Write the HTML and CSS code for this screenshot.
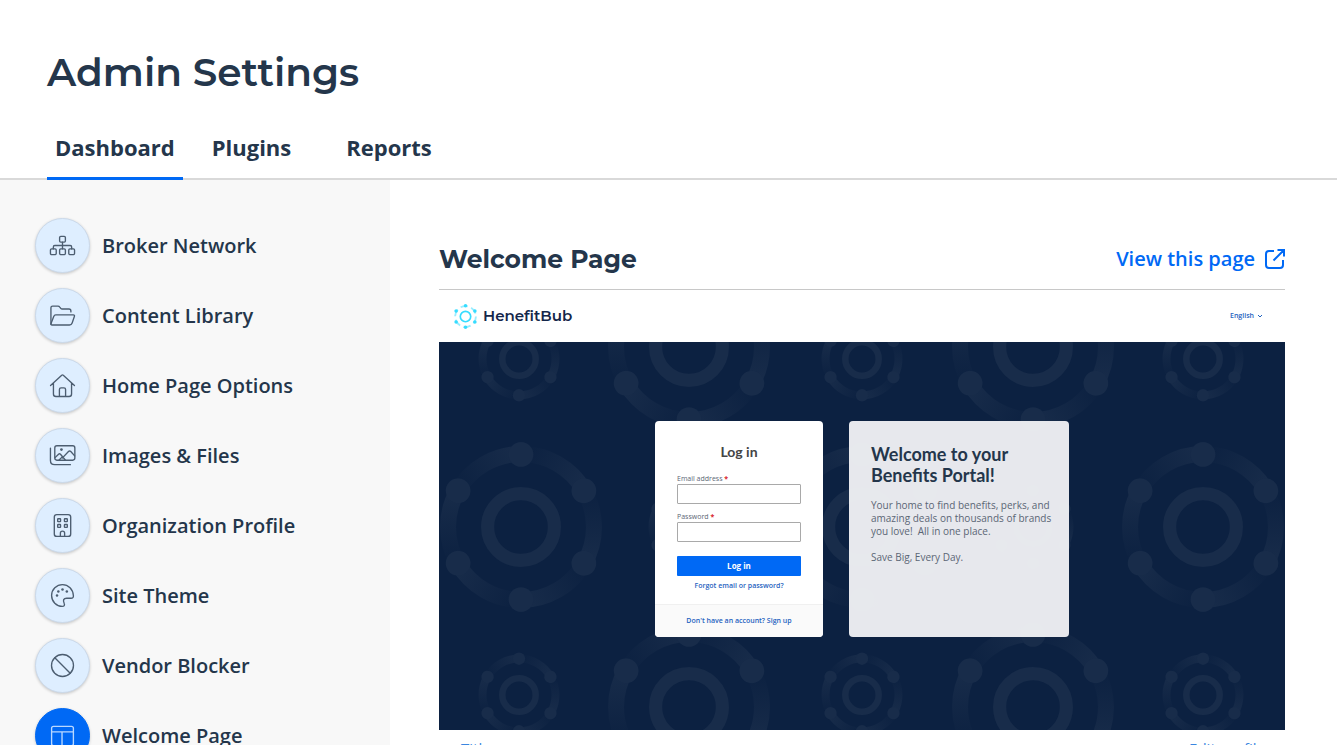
FILE: index.html
```html
<!DOCTYPE html>
<html lang="en">
<head>
<meta charset="utf-8">
<meta name="viewport" content="width=device-width, initial-scale=1">
<title>Admin Settings</title>
<link rel="stylesheet" href="styles.css">
</head>
<body>
<header class="page-header">
  <h1 class="page-title">Admin Settings</h1>
  <nav class="tabs" aria-label="Settings sections">
    <a class="tab tab-active" href="#dashboard" aria-current="page">Dashboard</a>
    <a class="tab" href="#plugins">Plugins</a>
    <a class="tab tab-last" href="#reports">Reports</a>
  </nav>
</header>
<div class="layout">
  <nav class="sidebar" aria-label="Dashboard">
    <a class="side-link" href="#broker"><span class="side-icon"><svg viewBox="0 0 28 28"><rect x="11" y="4.5" width="6" height="6" rx="1.2"/><rect x="1.500" y="17.500" width="6" height="6" rx="1.200"/><rect x="11" y="17.500" width="6" height="6" rx="1.200"/><rect x="20.500" y="17.500" width="6" height="6" rx="1.200"/><path d="M14 10.500v7M4.500 17.500v-2q0-1.500 1.500-1.500h16q1.500 0 1.500 1.500v2"/></svg></span>Broker Network</a>
    <a class="side-link" href="#content"><span class="side-icon"><svg viewBox="0 0 28 28"><path d="M2 23V6q0-1.700 1.700-1.700h5.600q1.200 0 1.900 1l1 1.300q.5.700 1.500.700h7q2 0 2 2v1"/><path d="M7 13.400h18.200q1.700 0 1.100 1.700l-2.300 6.700q-.7 2.100-2.800 2.100H3.200Q1.600 23.900 2.200 22l2.700-7q.6-1.600 2.100-1.600Z"/></svg></span>Content Library</a>
    <a class="side-link" href="#home"><span class="side-icon"><svg viewBox="0 0 28 28"><path d="M1.600 14 13.200 3.300q.8-.7 1.600 0L26.400 14M4.600 11.500v11.300q0 2.600 2.600 2.600h13.600q2.600 0 2.600-2.600V11.500M10.800 25.200v-7q0-1.700 1.700-1.700h3q1.700 0 1.700 1.700v7"/></svg></span>Home Page Options</a>
    <a class="side-link" href="#images"><span class="side-icon"><svg viewBox="0 0 28 28"><rect x="6" y="3.900" width="20.800" height="15" rx="2.200"/><path d="M6.300 16.200l3.600-3.500q1-1 2 0l5 6M14 16.500l6.200-6.600q1.200-1.200 2.400 0l4 4.500M10.500 18.700l3-3"/><circle class="icon-dot" cx="12.900" cy="7.900" r="1.400"/><path d="M1.500 6.400v12.700q0 4.400 4.400 4.400h16.300"/></svg></span>Images &amp; Files</a>
    <a class="side-link" href="#organization"><span class="side-icon"><svg viewBox="0 0 28 28"><rect x="5.500" y="2.700" width="17" height="22.600" rx="2.600"/><rect x="9" y="7" width="3" height="3" rx=".5"/><rect x="16" y="7" width="3" height="3" rx=".5"/><rect x="9" y="13" width="3" height="3" rx=".5"/><rect x="16" y="13" width="3" height="3" rx=".5"/><path d="M11.800 25v-3q0-2.200 2.200-2.200t2.200 2.200v3"/></svg></span>Organization Profile</a>
    <a class="side-link" href="#theme"><span class="side-icon"><svg viewBox="0 0 28 28"><path d="M14 2.700C7.800 2.700 2.700 7.700 2.700 14S7.800 25.300 13.700 25.300c2 0 2.900-1.300 2-3.200-1.400-3.200-.7-5.200 2.600-5.200h4.500c1.800 0 2.700-.9 2.500-2.700C24.900 7.700 20.200 2.700 14 2.700Z"/><g class="icon-dot"><circle cx="8.300" cy="14" r="1.300"/><circle cx="9.700" cy="9.800" r="1.300"/><circle cx="14" cy="7.900" r="1.300"/><circle cx="18.500" cy="9.800" r="1.300"/></g></svg></span>Site Theme</a>
    <a class="side-link" href="#vendor"><span class="side-icon"><svg viewBox="0 0 28 28"><circle cx="14" cy="14" r="11.400"/><path d="m6 6 16 16"/></svg></span>Vendor Blocker</a>
    <a class="side-link side-link-active" href="#welcome" aria-current="page"><span class="side-icon"><svg viewBox="0 0 28 28"><rect x="2.700" y="4.500" width="22.600" height="20" rx="2"/><path d="M2.700 10.300h22.600M13.500 10.300v14"/></svg></span>Welcome Page</a>
  </nav>
  <main class="content">
    <div class="content-head">
      <h2 class="content-title">Welcome Page</h2>
      <a class="view-link" href="#view">View this page <svg class="view-icon" viewBox="0 0 20 20"><path d="M9 2H4Q1 2 1 5v11q0 3 3 3h11q3 0 3-3v-5M8.500 11.500 18.500 1.500M12.500 1H19v6.500"/></svg></a>
    </div>
    <section class="preview" aria-label="Welcome page preview">
      <div class="preview-bar">
        <span class="brand">
          <svg class="brand-mark" viewBox="-12 -12 24 24"><circle r="5" /><circle class="brand-orbit" r="10"/><g class="brand-dots"><circle cy="-10.300" r="1.700"/><circle cy="10.300" r="1.700"/><circle cx="-9" cy="-5.200" r="1.700"/><circle cx="9" cy="-5.200" r="1.700"/><circle cx="-9" cy="5.200" r="1.700"/><circle cx="9" cy="5.200" r="1.700"/></g></svg>
          HenefitBub
        </span>
        <button class="language" type="button">English <svg class="chevron" viewBox="0 0 6 4"><path d="m1 1 2 2 2-2"/></svg></button>
      </div>
      <div class="hero">
        <svg class="hero-art" viewBox="0 0 846 388" preserveAspectRatio="xMidYMid slice" aria-hidden="true">
          <defs>
            <linearGradient id="fade" gradientUnits="userSpaceOnUse" x1="0" y1="-36" x2="-31" y2="-18"><stop stop-color="#182c4a"/><stop offset="1" stop-color="#182c4a" stop-opacity="0"/></linearGradient>
            <g id="arm"><path d="M0-36.500A36.500 36.500 0 0 0-31.600-18.200" fill="none" stroke="url(#fade)" stroke-width="8"/><circle cy="-36.300" r="6.200" fill="#182c4a"/></g>
            <g id="orbit"><circle r="16.700" fill="none" stroke="#182c4a" stroke-width="6.600"/><use href="#arm"/><use href="#arm" transform="rotate(60)"/><use href="#arm" transform="rotate(120)"/><use href="#arm" transform="rotate(180)"/><use href="#arm" transform="rotate(240)"/><use href="#arm" transform="rotate(300)"/></g>
          </defs>
          <use href="#orbit" transform="translate(80 17)"/>
          <use href="#orbit" transform="translate(423 17)"/>
          <use href="#orbit" transform="translate(764 17)"/>
          <use href="#orbit" transform="translate(250 5) scale(2)"/>
          <use href="#orbit" transform="translate(594 5) scale(2)"/>
          <use href="#orbit" transform="translate(82 185) scale(2)"/>
          <use href="#orbit" transform="translate(423 185) scale(2)"/>
          <use href="#orbit" transform="translate(764 185) scale(2)"/>
          <use href="#orbit" transform="translate(250 185)"/>
          <use href="#orbit" transform="translate(594 185)"/>
          <use href="#orbit" transform="translate(80 353)"/>
          <use href="#orbit" transform="translate(423 353)"/>
          <use href="#orbit" transform="translate(764 353)"/>
          <use href="#orbit" transform="translate(250 365) scale(2)"/>
          <use href="#orbit" transform="translate(594 365) scale(2)"/>
        </svg>
        <form class="login">
          <div class="login-body">
            <h3 class="login-title">Log in</h3>
            <label class="field-label" for="email">Email address <span class="required">*</span></label>
            <input class="field" id="email" type="email">
            <label class="field-label" for="password">Password <span class="required">*</span></label>
            <input class="field" id="password" type="password">
            <button class="login-button" type="button">Log in</button>
            <a class="small-link" href="#forgot">Forgot email or password?</a>
          </div>
          <div class="login-foot"><a class="small-link" href="#signup">Don't have an account? Sign up</a></div>
        </form>
        <section class="welcome">
          <h3 class="welcome-title">Welcome to your Benefits Portal!</h3>
          <p class="welcome-text">Your home to find benefits, perks, and amazing deals on thousands of brands you love!&nbsp; All in one place.</p>
          <p class="welcome-text">Save Big, Every Day.</p>
        </section>
      </div>
      <div class="preview-foot"><a class="foot-link" href="#title">Title</a><a class="foot-link" href="#edit">Edit profile</a></div>
    </section>
  </main>
</div>
</body>
</html>
```

FILE: styles.css
```css
* { box-sizing: border-box; }
html { scrollbar-width: none; }
body {
  margin: 0;
  background: #fff;
  color: #24364b;
  font-family: "Open Sans", sans-serif;
}
a { text-decoration: none; }
h1, h2, h3, p { margin: 0; }
svg { fill: none; stroke: currentColor; flex: none; }

.page-header {
  padding: 44px 47px 0;
  border-bottom: 2px solid #d9d9d9;
}
.page-title {
  font: 600 39px/56px Montserrat, Inter, sans-serif;
}
.tabs { display: flex; margin-top: 20px; margin-bottom: -2px; }
.tab {
  padding: 12px 8px 14px;
  margin-right: 21px;
  border-bottom: 3px solid transparent;
  color: inherit;
  font-size: 22px;
  line-height: 31px;
  font-weight: 700;
}
.tab-active { border-color: #0069f5; }
.tab-last { margin-left: 18px; }

.layout { display: flex; }
.sidebar {
  display: flex;
  flex-direction: column;
  gap: 15px;
  flex: none;
  width: 390px;
  padding: 38px 35px;
  background: #f8f8f8;
}
.side-link {
  display: flex;
  align-items: center;
  gap: 12px;
  color: inherit;
  font-size: 20px;
  font-weight: 600;
}
.side-icon {
  display: grid;
  place-items: center;
  width: 55px;
  height: 55px;
  border: 1px solid #cbd9ea;
  border-radius: 50%;
  background: #deeeff;
  box-shadow: 0 1px 3px rgba(0, 0, 0, .2);
  color: #4c5d70;
}
.side-icon svg { width: 27px; height: 27px; stroke-width: 1.4; stroke-linecap: round; stroke-linejoin: round; }
.side-icon svg .icon-dot { fill: currentColor; stroke: none; }
.side-link-active .side-icon { background: #0069f5; border-color: #0069f5; color: #b9d8ff; }

.content { flex: 1; min-width: 0; padding: 54px 52px 0 49px; }
.content-head {
  display: flex;
  align-items: center;
  justify-content: space-between;
  height: 56px;
  padding-bottom: 6px;
  border-bottom: 1px solid #c8c8c8;
}
.content-title { font: 700 25px/32px Montserrat, Inter, sans-serif; }
.view-link {
  display: flex;
  align-items: center;
  gap: 10px;
  color: #0069f5;
  font-size: 20px;
  font-weight: 600;
}
.view-icon { width: 20px; height: 20px; stroke-width: 2; }

.preview-bar {
  display: flex;
  align-items: center;
  justify-content: space-between;
  height: 52px;
  padding: 0 22px 0 14px;
}
.brand {
  display: flex;
  align-items: center;
  gap: 5px;
  color: #14264a;
  font: 600 15px/24px Montserrat, Inter, sans-serif;
}
.brand-mark { width: 25px; height: 25px; color: #35dcff; stroke-width: 1.6; }
.brand-orbit { stroke-width: 1.8; stroke-dasharray: 7 3.5; opacity: .5; }
.brand-dots { fill: currentColor; stroke: none; }
.language {
  display: flex;
  align-items: center;
  gap: 3px;
  padding: 0;
  border: 0;
  background: none;
  color: #1f62c0;
  font: 600 7px/10px "Open Sans", sans-serif;
}
.chevron { width: 6px; height: 4px; }

.hero {
  position: relative;
  display: flex;
  justify-content: center;
  gap: 26px;
  padding: 79px 20px 93px;
  background: #0c2141;
}
.hero-art { position: absolute; inset: 0; width: 100%; height: 100%; stroke: none; }
.login, .welcome { position: relative; border-radius: 4px; overflow: hidden; }
.login { width: 168px; background: #fff; }
.login-body { display: flex; flex-direction: column; padding: 21px 22px 12px; }
.login-title {
  margin-bottom: 12px;
  color: #444;
  font: 700 14px/20px Lato, sans-serif;
  text-align: center;
}
.field-label { color: #5b6675; font-size: 7px; line-height: 10px; }
.required { color: #d8232a; font-weight: 700; }
.field {
  width: 100%;
  height: 20px;
  margin-bottom: 8px;
  padding: 0 4px;
  border: 1px solid #a9a9a9;
  border-radius: 1px;
  font: 8px "Open Sans", sans-serif;
}
.login-button {
  height: 20px;
  margin: 6px 0 4px;
  border: 0;
  border-radius: 1px;
  background: #0069f5;
  color: #fff;
  font: 700 8px/12px "Open Sans", sans-serif;
}
.small-link {
  color: #1f62c0;
  font-size: 7px;
  line-height: 12px;
  font-weight: 600;
  text-align: center;
}
.login-foot {
  display: flex;
  justify-content: center;
  padding: 10px 0;
  border-top: 1px solid #f0f0f0;
  background: #fafafa;
}
.welcome { width: 220px; padding: 23px 14px 22px 22px; background: rgba(236, 237, 241, .98); }
.welcome-title { font: 700 18px/21px Lato, sans-serif; }
.welcome-text { margin-top: 13px; color: #5b6675; font-size: 10px; line-height: 13px; }
.preview-foot { display: flex; justify-content: space-between; padding: 8px 20px 20px 22px; }
.foot-link { color: #3b86e0; font-size: 15px; line-height: 20px; }
```
